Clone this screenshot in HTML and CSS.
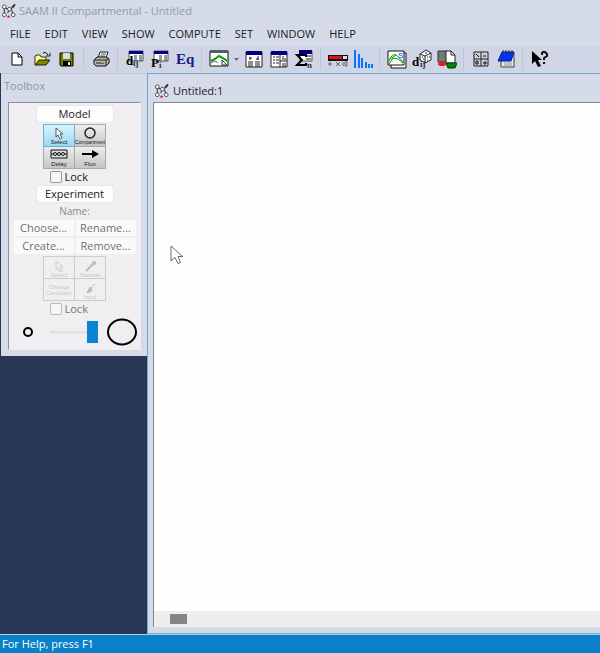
FILE: index.html
```html
<!DOCTYPE html>
<html lang="en">
<head>
<meta charset="utf-8">
<title>SAAM II Compartmental - Untitled</title>
<link rel="stylesheet" href="styles.css">
</head>
<body>
<svg class="defs" aria-hidden="true">
  <symbol id="logo" viewBox="0 0 16 16">
    <path d="M3 4L4 11M3 4L9 7L14 3M9 7L7 10M11 6L13 12" fill="none" stroke="#444" stroke-width="1.2"/>
    <g fill="#fff" stroke="#444"><circle cx="3.5" cy="3.5" r="2"/><circle cx="3.5" cy="12" r="2"/><circle cx="9" cy="6" r="2"/><circle cx="13" cy="12" r="2"/></g>
    <path d="M12 4L15 1" stroke="#333" stroke-width="2"/><circle cx="8" cy="14" r="1.3" fill="#e01020"/>
  </symbol>
  <symbol id="arrow" viewBox="0 0 14 20">
    <path d="M1 1V16L5 12.5L8 18.5L10.5 17.5L8 11.5H12.5Z" fill="#fff" stroke="#686868" stroke-linejoin="round"/>
  </symbol>
</svg>
<div class="app">
  <header class="title"><svg class="logo"><use href="#logo"/></svg><span>SAAM II Compartmental - Untitled</span></header>
  <nav class="menu">
    <button>FILE</button><button>EDIT</button><button>VIEW</button><button>SHOW</button><button>COMPUTE</button><button>SET</button><button>WINDOW</button><button>HELP</button>
  </nav>
  <div class="toolbar">
    <button aria-label="New"><svg viewBox="0 0 20 20"><path d="M5 4H11L15 8V16H5Z" fill="#fff" stroke="#000"/><path d="M11 4V8H15" fill="none" stroke="#000"/></svg></button>
    <button aria-label="Open"><svg viewBox="0 0 20 20"><path d="M3 16V7L5 6H8L9 8H14V11" fill="#ffff90" stroke="#333300"/><path d="M3 16L7 11H18L14 16Z" fill="#858500" stroke="#222200"/><path d="M11 4Q14 2 16 6M18 4V7H14" fill="none" stroke="#111"/></svg></button>
    <button aria-label="Save"><svg viewBox="0 0 20 20"><path d="M3 4H16V17H4L3 16Z" fill="#777b00" stroke="#000"/><path d="M6 4H13V10H6Z" fill="#d6dbe9"/><path d="M6 12H14V17H6Z" fill="#000"/><path d="M11 13H13V16H11Z" fill="#eee"/></svg></button>
    <i class="sep"></i>
    <button aria-label="Print"><svg viewBox="0 0 20 20"><path d="M7 9L9 3H17L15 9" fill="#fff" stroke="#222"/><path d="M10 5H15M9 7H14" stroke="#555"/><path d="M3 11L6 8H15L18 10V14L15 17H5L3 15Z" fill="#b7b7b7" stroke="#111"/><path d="M3 11H15L18 9M15 11V17M5 14H13" fill="none" stroke="#222"/><path d="M10 13H13" stroke="#d0d000"/></svg></button>
    <i class="sep"></i>
    <button aria-label="Data"><svg viewBox="0 0 20 20"><path d="M4 2H18V12H4Z" fill="#fff" stroke="#555"/><path d="M4 2H18V5H4Z" fill="#000080"/><path d="M9 7H12M14 7H17M9 9H12M14 9H17M9 11H12M14 11H17" stroke="#333"/><text x="1" y="16" class="glyph">d</text><text x="8" y="17" class="sub">ij</text></svg></button>
    <button aria-label="Parameters"><svg viewBox="0 0 20 20"><path d="M4 2H18V12H4Z" fill="#fff" stroke="#555"/><path d="M4 2H18V5H4Z" fill="#000080"/><path d="M9 7H12M14 7H17M9 9H12M14 9H17M9 11H12M14 11H17" stroke="#333"/><text x="1" y="18" class="glyph">P</text><text x="9" y="19" class="sub">i</text></svg></button>
    <button aria-label="Equations"><svg viewBox="0 0 20 20"><text x="1" y="15" class="eq">Eq</text></svg></button>
    <i class="sep"></i>
    <button aria-label="Plot"><svg viewBox="0 0 20 20"><path d="M1 2H19V17H1Z" fill="#fff" stroke="#111"/><path d="M1 1H19V4H1Z" fill="#555b68"/><path d="M2 12L6 10L10 7L14 9L18 12" fill="none" stroke="#00a000" stroke-width="2"/><path d="M2 14L6 12L9 14" fill="none" stroke="#666"/><path d="M13 11L18 16H13Z" fill="#fff" stroke="#333"/></svg></button>
    <button class="drop" aria-label="Plot options"><svg viewBox="0 0 10 20"><path d="M3 9H8L5.500 12Z" fill="#666c78"/></svg></button>
    <button aria-label="Table"><svg viewBox="0 0 20 20"><path d="M2 3H18V18H2Z" fill="#fff" stroke="#222"/><path d="M2 2H18V6H2Z" fill="#000080"/><path d="M6 8V11M5 9H8M14 7V11M12 10H15" fill="none" stroke="#222"/><path d="M4 13H9M11 13H16M4 15H9M11 15H16M4 17H9M11 17H16" stroke="#222"/></svg></button>
    <button aria-label="Summary"><svg viewBox="0 0 20 20"><path d="M2 3H18V18H2Z" fill="#fff" stroke="#222"/><path d="M2 2H18V6H2Z" fill="#000080"/><path d="M11 6V18M4 8H6M7 8H10M4 11H6M7 11H10M4 14H6M7 14H10M14 7V11M15 10H17M11 12H18M13 15H17M13 17H17" stroke="#222"/></svg></button>
    <button aria-label="Statistics"><svg viewBox="0 0 20 20"><path d="M6 2H18V12H6Z" fill="#fff" stroke="#555"/><path d="M5 1H18V5H5Z" fill="#000080"/><path d="M12 7H17M12 10H17" stroke="#111"/><path d="M12 8V6H3L8 11L3 16H12V14" fill="none" stroke="#000" stroke-width="2"/><text x="13" y="19" class="sub">n</text></svg></button>
    <i class="sep"></i>
    <button aria-label="Progress"><svg viewBox="0 0 20 20"><path d="M0 6H20V12H0Z" fill="#111"/><path d="M1 7H14V10H1Z" fill="#e01016"/><path d="M15 7H19V10H15Z" fill="#ddd"/><path d="M0 15H4M2 13V17M8 13L12 17M12 13L8 17M15 13V17M17 13H19V17H17Z" fill="none" stroke="#666"/></svg></button>
    <button aria-label="Histogram"><svg viewBox="0 0 20 20"><path d="M2 1V19M6 5V19M9 9V19M13 13V19M16 15V19M19 15V19" stroke="#0874ff" stroke-width="2"/></svg></button>
    <i class="sep"></i>
    <button aria-label="Curves"><svg viewBox="0 0 20 20"><path d="M4 4H19V19H4Z" fill="#fff" stroke="#111"/><path d="M1 2H17V16H1Z" fill="#fff" stroke="#111"/><path d="M2 12Q5 4 9 6Q12 8 16 13M2 15L6 9L11 10L16 14M3 10L9 6" fill="none" stroke="#00a000"/><text x="11" y="9" class="tiny">S</text></svg></button>
    <button aria-label="Sampling"><svg viewBox="0 0 20 20"><path d="M8 5L14 1L19 4V11L13 14L8 11Z" fill="#fff" stroke="#222"/><path d="M8 5L13 7L19 4M13 7V14" fill="none" stroke="#222"/><path d="M10 8h1M11 10h1M15 8h1M17 8h1M13 4h2M15 11h1" stroke="#222"/><text x="0" y="17" class="glyph">d</text><text x="8" y="18" class="sub">ij</text></svg></button>
    <button aria-label="Export"><svg viewBox="0 0 20 20"><path d="M1 2H10V13H1Z" fill="#777" stroke="#333"/><path d="M9 2H14L18 6V14H9Z" fill="#fff" stroke="#222"/><path d="M14 2V6H18" fill="none" stroke="#222"/><ellipse cx="5" cy="15" rx="4" ry="2" fill="#ed1717"/><path d="M9 14H20L18 19H11Z" fill="#008a00" stroke="#004000"/></svg></button>
    <i class="sep"></i>
    <button aria-label="Calculator"><svg viewBox="0 0 20 20"><path d="M3 3H17V17H3ZM10 3V17M3 10H17" fill="#ccd0da" stroke="#222"/><path d="M5 5L8 8M12 7H15M5 12H7V15H5ZM12 14H16M14 12V16" fill="none" stroke="#111"/></svg></button>
    <button aria-label="Notebook"><svg viewBox="0 0 20 20"><path d="M8 4H18V18H5V9Z" fill="#e5e5e5" stroke="#444"/><path d="M8 14H16M8 16H16" stroke="#999"/><path d="M6 3H18L15 12H2Z" fill="#0636e8" stroke="#071590"/><path d="M7 1V4M10 1V4M13 1V4M16 1V4" stroke="#333"/></svg></button>
    <i class="sep"></i>
    <button aria-label="Context help"><svg viewBox="0 0 20 20"><path d="M2 2V15L5 12L8 18L11 17L8 11H12Z" fill="#000"/><path d="M12 6V4L13 3H15L17 5V7L14 9V11M14 13V15" fill="none" stroke="#111" stroke-width="2"/></svg></button>
  </div>
  <main class="workspace">
    <aside class="toolbox">
      <h2>Toolbox</h2>
      <div class="panel">
        <button class="wide">Model</button>
        <div class="tiles">
          <button class="on"><svg viewBox="0 0 30 14"><path d="M12 3V12L14 10L16 14L18 13L16 9H19Z" fill="#fff" stroke="#555"/></svg>Select</button>
          <button class="long"><svg viewBox="0 0 30 14"><circle cx="15" cy="8" r="5" fill="none" stroke="#222" stroke-width="1.500"/></svg>Compartment</button>
          <button><svg viewBox="0 0 30 14"><path d="M7 3H23V11H7ZM7 7H23" fill="#ddd" stroke="#111"/><g fill="#eee" stroke="#111"><circle cx="11" cy="7" r="1.500"/><circle cx="15" cy="7" r="1.500"/><circle cx="19" cy="7" r="1.500"/></g></svg>Delay</button>
          <button><svg viewBox="0 0 30 14"><path d="M7 7H18" stroke="#000" stroke-width="2"/><path d="M17 3L24 7L17 11Z"/></svg>Flux</button>
        </div>
        <label><input type="checkbox">Lock</label>
        <button class="wide">Experiment</button>
        <p>Name:</p>
        <div class="commands"><button disabled>Choose...</button><button disabled>Rename...</button><button disabled>Create...</button><button disabled>Remove...</button></div>
        <div class="tiles off">
          <button disabled><svg viewBox="0 0 30 14"><path d="M12 3V12L14 10L16 14L18 13L16 9H19Z" fill="none" stroke="#ccc"/></svg>Select</button>
          <button disabled><svg viewBox="0 0 30 14"><path d="M11 13L19 5" stroke="#bbb" stroke-width="2"/><circle cx="19" cy="5" r="2" fill="#bbb"/></svg>Sample</button>
          <button disabled>Change<br>Condition</button>
          <button disabled><svg viewBox="0 0 30 14"><path d="M12 13L20 4M12 13L15 7L17 11Z" fill="#bbb" stroke="#bbb"/></svg>Input</button>
        </div>
        <label class="muted"><input type="checkbox" disabled>Lock</label>
        <div class="size"><svg class="small" viewBox="0 0 10 10"><circle cx="5" cy="5" r="4"/></svg><input type="range" value="100" aria-label="Symbol size"><svg class="large" viewBox="0 0 32 28"><ellipse cx="16" cy="14" rx="14" ry="12.500"/></svg></div>
      </div>
    </aside>
    <section class="document">
      <div class="doc-title"><svg class="logo"><use href="#logo"/></svg><span>Untitled:1</span></div>
      <div class="canvas"><svg class="pointer"><use href="#arrow"/></svg></div>
      <div class="scroll"><span></span></div>
    </section>
  </main>
  <footer>For Help, press F1</footer>
</div>
</body>
</html>
```
FILE: styles.css
```css
* { box-sizing: border-box; }
body { margin: 0; background: #d6dbe9; color: #202124; font: 12px/16px "Open Sans", "Noto Sans", sans-serif; }
button { padding: 0; border: 0; background: none; color: inherit; font: inherit; }
.defs { position: absolute; width: 0; height: 0; }
.app { display: flex; flex-direction: column; height: 100vh; }
.title { display: flex; align-items: center; gap: 3px; height: 22px; padding-left: 1px; color: #939aa7; font-size: 11px; }
.logo { width: 15px; height: 16px; flex: none; }
.menu { display: flex; align-items: center; gap: 14px; height: 24px; padding-left: 10px; font-size: 11px; }
.toolbar { display: flex; align-items: center; height: 27px; padding: 0 0 2px 4px; background: #cfd5e4; }
.toolbar button { display: flex; justify-content: center; width: 25px; flex: none; }
.toolbar svg { width: 20px; height: 20px; }
.toolbar .drop { width: 10px; }
.toolbar .drop svg { width: 10px; }
.sep { flex: none; width: 1px; height: 22px; margin: 0 4px; background: #bdc5d6; }
.glyph { font: bold 13px "Liberation Serif", serif; }
.sub { font: bold 9px "Liberation Serif", serif; fill: #333; }
.eq { font: bold 15px "Liberation Serif", serif; fill: #101c8c; }
.tiny { font: 8px "Liberation Sans", sans-serif; fill: #0040ff; }
.workspace { display: flex; flex: 1; min-height: 0; padding-left: 1px; background: #293955; }
.toolbox { align-self: flex-start; width: 146px; flex: none; padding: 4px 6px 6px 7px; background: #d6dbe9; border-top: 1px solid #bdc5d6; }
.toolbox h2 { margin: 0 0 8px -4px; color: #8e95a3; font-size: 11px; font-weight: 400; line-height: 16px; }
.panel { display: flex; flex-direction: column; align-items: center; height: 248px; padding: 3px 0 0; border: 1px solid #8d9099; border-right-color: #eee; border-bottom-color: #eee; background: #f0eef0; font: 11px/16px "Open Sans", sans-serif; }
.wide { flex: none; width: 76px; height: 16px; background: #fdfdfd; border-radius: 2px; box-shadow: 0 0 1px #aaa; line-height: 16px; }
.tiles { display: grid; flex: none; grid-template-columns: 30px 30px; grid-template-rows: 21px 21px; gap: 1px; width: 63px; margin: 2px 0 0; padding: 1px; background: #aaa; font: 6px/6px "Liberation Sans", sans-serif; }
.tiles button { display: flex; flex-direction: column; align-items: center; background: linear-gradient(#eee, #c5c5c7); }
.tiles svg { width: 30px; height: 14px; flex: none; }
.tiles .on { background: linear-gradient(#d9f1fb, #9dd9f3); box-shadow: 0 0 0 1px #63b6d2; }
.tiles .long { font-size: 5px; }
label { display: flex; flex: none; align-items: center; gap: 3px; width: 50px; height: 15px; }
input[type=checkbox] { appearance: none; flex: none; width: 12px; height: 12px; margin: 0; border: 1px solid #999; border-radius: 2px; background: #f8f8f8; }
label + .wide { margin-top: 2px; }
p { margin: 2px 0 1px; color: #8b8b8d; font-size: 10px; line-height: 15px; }
.commands { display: grid; grid-template-columns: 60px 60px; gap: 2px; color: #707072; }
.commands button { height: 16px; background: #fafafa; line-height: 16px; }
.off { background: #ccc; color: #c9c7ca; }
.off button { justify-content: center; background: #f0eef0; }
.muted { color: #777; }
.muted input[type=checkbox] { border-color: #bbb; }
.size { display: flex; flex: none; align-items: center; width: 100%; height: 32px; padding: 0 3px 0 14px; }
.size circle, .size ellipse { fill: none; stroke: #000; stroke-width: 2; }
.small { width: 10px; height: 10px; flex: none; }
.large { width: 32px; height: 28px; flex: none; }
.size input { appearance: none; flex: none; width: 48px; height: 22px; margin: 0 8px 0 17px; background: linear-gradient(#ddd, #e8e8e8) center / 100% 3px no-repeat; }
.size input::-webkit-slider-thumb { appearance: none; width: 11px; height: 22px; background: #0c84d4; }
.document { display: flex; flex: 1; flex-direction: column; min-width: 0; padding: 7px 0 6px 5px; border-top: 1px solid #75a9c7; border-left: 1px solid #75a9c7; border-bottom: 1px solid #75a9c7; background: #d6dbe9; }
.doc-title { display: flex; align-items: center; gap: 4px; height: 21px; padding: 0 0 1px 1px; font-size: 11px; }
.canvas { position: relative; flex: 1; border-left: 1px solid #85878d; border-top: 1px solid #85878d; background: #fffefe; }
.pointer { position: absolute; left: 16px; top: 142px; width: 14px; height: 20px; }
.scroll { height: 16px; padding: 3px 0 0 16px; border-left: 1px solid #85878d; background: #efedef; }
.scroll span { display: block; width: 17px; height: 10px; background: #858585; }
footer { height: 19px; padding: 1px 2px; border-top: 1px solid #b0cfe2; background: #0a80c8; color: #fff; font-size: 11px; }
```
